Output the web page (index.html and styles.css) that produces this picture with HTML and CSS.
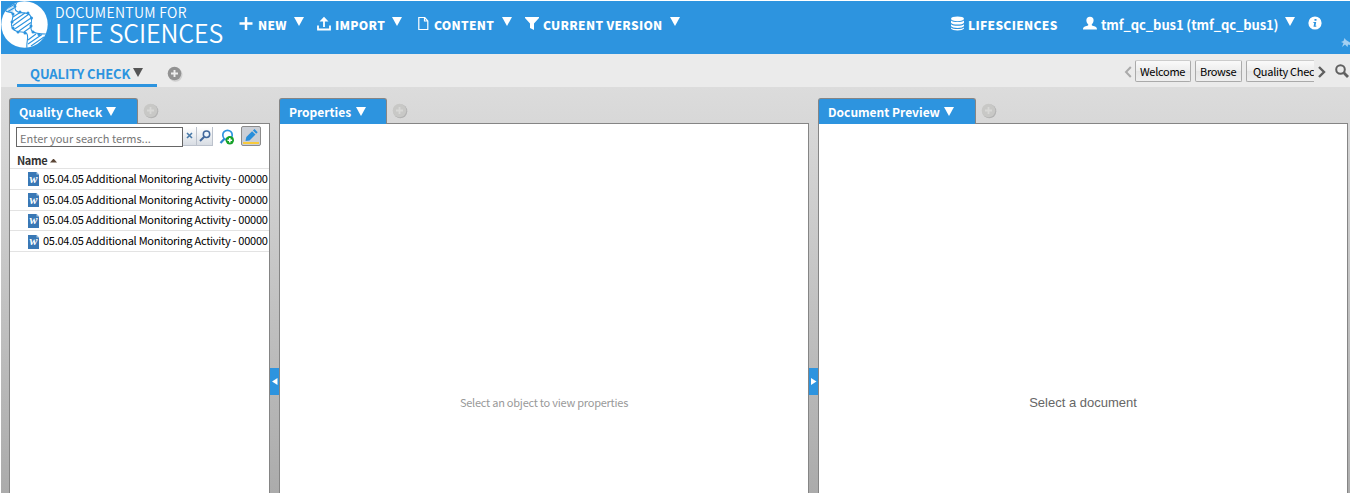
FILE: index.html
```html
<!DOCTYPE html>
<html lang="en">
<head>
<meta charset="utf-8">
<title>Documentum for Life Sciences</title>
<link rel="stylesheet" href="styles.css">
</head>
<body>
<div class="app">
  <header class="header">
    <svg class="logo" width="49" height="48" viewBox="0 0 49 48">
      <defs><clipPath id="disc"><circle cx="24.500" cy="23.500" r="23.500"/></clipPath></defs>
      <circle cx="24.500" cy="23.500" r="23.200" fill="#fff"/>
      <g clip-path="url(#disc)">
        <path d="M0 0H17L14 7L12.500 13L5 10L0 14z" fill="#2d94df" opacity=".25"/>
        <g fill="none" stroke="#2d94df" stroke-width="1.100">
          <path d="M17 1C14 6 14 9 18 11S29 10 31 16S29 27 32 30S40 33 46 33"/>
          <path d="M5 9C7 13 13 9 13 14S9 25 14 29S25 29 27 33S26 41 27 47"/>
          <path d="M6 8L15 3M8 10.500L14 7M13 16L20 11.500M12.500 20.500L25 12M12.500 25L29 13M14 28.500L31 17M19 30L31 21.500M24 31L31 26M28 39L36 33M28 43L42 33.500M31 45L44 36"/>
        </g>
        <g fill="#2d94df"><circle cx="15" cy="5.500" r="1.400"/><circle cx="20" cy="11" r="1.500"/><circle cx="28" cy="12" r="1.500"/><circle cx="31.500" cy="17" r="1.500"/><circle cx="31" cy="25" r="1.500"/><circle cx="13" cy="13" r="1.500"/><circle cx="12" cy="21" r="1.500"/><circle cx="13" cy="27" r="1.500"/><circle cx="18" cy="31" r="1.500"/><circle cx="25" cy="32" r="1.500"/><circle cx="33" cy="31" r="1.500"/><circle cx="39" cy="33.500" r="1.500"/></g>
      </g>
    </svg>
    <div class="brand"><span class="brand-top">DOCUMENTUM FOR</span><span class="brand-main">LIFE SCIENCES</span></div>
    <nav class="menu">
      <div class="item new"><svg width="18" height="16" viewBox="0 0 18 16"><path d="M7 1v13M.5 7.500h13" stroke="#fff" stroke-width="2.500"/></svg><span class="label">NEW</span><i class="tri"></i></div>
      <div class="item import"><svg width="18" height="16" viewBox="0 0 18 16"><path d="M1 9.500v4h12v-4M7 11V4" fill="none" stroke="#fff" stroke-width="1.800"/><path d="M2.500 5.500L7 .7l4.500 4.800z" fill="#fff"/></svg><span class="label">IMPORT</span><i class="tri"></i></div>
      <div class="item content"><svg width="16" height="16" viewBox="0 0 16 16"><path d="M.8 1.500h6L9.800 5v8.500h-9zM6.500 1.500V5h3" fill="none" stroke="#fff" stroke-width="1.200"/></svg><span class="label">CONTENT</span><i class="tri"></i></div>
      <div class="item version"><svg width="18" height="16" viewBox="0 0 18 16"><path d="M0 1h14v1L9 7.500V14l-4-2V7.500L0 2z" fill="#fff"/></svg><span class="label">CURRENT VERSION</span><i class="tri"></i></div>
    </nav>
    <div class="account">
      <div class="item repo"><svg width="18" height="16" viewBox="0 0 18 16"><g fill="#fff"><ellipse cx="7.500" cy="2.800" rx="6.500" ry="2.400"/><path d="M1 4.500c2 2 11 2 13 0v2.200c-1 2.500-12 2.500-13 0zM1 8.200c2 2 11 2 13 0v1.800c-1 2.500-12 2.500-13 0zM1 11.500c2 2 11 2 13 0v1c-1 2.500-12 2.500-13 0z"/></g></svg><span class="label">LIFESCIENCES</span></div>
      <div class="item user"><svg width="18" height="16" viewBox="0 0 18 16"><path d="M7 .8c5 0 4 6 1.800 7.500v1c2 1.200 5.200.8 5.200 4.200H0c0-3.400 3.200-3 5.200-4.200v-1C3 6.800 2 .8 7 .8z" fill="#fff"/></svg><span class="label">tmf_qc_bus1 (tmf_qc_bus1)</span><i class="tri"></i></div>
      <svg class="info" width="14" height="14" viewBox="0 0 14 14"><circle cx="7" cy="7" r="6.600" fill="#fff"/><path d="M6.500 3h2v1.700h-2zM5.500 6h2.700L7.500 9.700h1l-.3 1H5.500L6.200 7h-.9z" fill="#2d94df"/></svg>
      <svg class="pin" width="9" height="10" viewBox="0 0 9 10"><path d="M3.500 0L5 2l4 2.500V7L7 6.500 6.500 9 4 6.500 1 9l1.500-4L0 4l2.500-1z" fill="#a4d0f2"/></svg>
    </div>
  </header>

  <div class="tabs">
    <div class="tab-active"><span class="tab-label">QUALITY CHECK</span><i class="tri dark"></i></div>
    <svg class="add" width="16" height="16" viewBox="0 0 16 16"><circle cx="8.500" cy="8.700" r="7" fill="#d0d0d0"/><circle cx="7.500" cy="7.500" r="6.800" fill="#929292"/><path d="M7.500 4v7M4 7.500h7" stroke="#ededed" stroke-width="1.900"/></svg>
    <div class="crumbs">
      <svg class="prev" width="8" height="12" viewBox="0 0 8 12"><path d="M6.800 1L2 6l4.800 5" fill="none" stroke="#aaa" stroke-width="2"/></svg>
      <div class="crumb welcome">Welcome</div>
      <div class="crumb browse">Browse</div>
      <div class="crumb quality">Quality Check</div>
      <svg class="next" width="8" height="12" viewBox="0 0 8 12"><path d="M1 1l5 5-5 5" fill="none" stroke="#606060" stroke-width="2.400"/></svg>
      <svg class="find" width="14" height="14" viewBox="0 0 14 14"><circle cx="5.500" cy="5.500" r="4.300" fill="none" stroke="#606060" stroke-width="2"/><path d="M8.800 8.800l4.200 4.200" stroke="#606060" stroke-width="2.800"/></svg>
    </div>
  </div>

  <main class="work">
    <section class="panel search-panel">
      <div class="panel-tabs"><div class="panel-tab t1"><span class="ptext">Quality Check</span><i class="tri"></i></div><svg class="ghost" width="16" height="16" viewBox="0 0 16 16"><circle cx="8.300" cy="8.300" r="7" fill="#b4b4b4"/><circle cx="7.500" cy="7.500" r="6.800" fill="#c8c8c6"/><path d="M7.500 4v7M4 7.500h7" stroke="#d8d8d6" stroke-width="1.800"/></svg></div>
      <div class="panel-body">
        <div class="search">
          <div class="field">Enter your search terms...</div>
          <div class="sbtn clear"><svg width="7" height="7" viewBox="0 0 7 7"><path d="M1 1l5 5M6 1L1 6" stroke="#4879a8" stroke-width="1.600"/></svg></div>
          <div class="sbtn go"><svg width="12" height="12" viewBox="0 0 12 12"><circle cx="7.500" cy="4.300" r="3.200" fill="#eef5fc" stroke="#41679b" stroke-width="1.500"/><path d="M5 7L1 11" stroke="#41679b" stroke-width="2"/></svg></div>
          <svg class="advanced" width="17" height="17" viewBox="0 0 17 17"><path d="M6 9.200L1.500 14" stroke="#2d86cd" stroke-width="2.200"/><circle cx="8.500" cy="6" r="4.700" fill="#fff" stroke="#2d94df" stroke-width="1.700"/><circle cx="10.800" cy="11.300" r="4.200" fill="#16a22a"/><path d="M10.800 9v4.600M8.500 11.300h4.600" stroke="#fff" stroke-width="1.600"/></svg>
          <div class="edit"><svg width="16" height="18" viewBox="0 0 16 18"><path d="M2.500 14l.8-4 5.800-5.800 3.400 3.400-6 5.800z" fill="#288edb"/><path d="M9.900 3.400L11.500 2l3.200 3.300-1.500 1.500z" fill="#288edb"/><path d="M0 16h16" stroke="#f8ca3c" stroke-width="2"/></svg></div>
        </div>
        <div class="name-head"><span class="name-label">Name</span><i class="sort"></i></div>
        <div class="row"><svg class="doc" width="11" height="14" viewBox="0 0 11 14"><path d="M0 0h8.500L11 2.500V14H0z" fill="#3978b5"/><path d="M8.500 0v2.500H11z" fill="#a9c8e4"/></svg><b class="w">w</b><span class="row-text">05.04.05 Additional Monitoring Activity - 00000</span></div>
        <div class="row"><svg class="doc" width="11" height="14" viewBox="0 0 11 14"><path d="M0 0h8.500L11 2.500V14H0z" fill="#3978b5"/><path d="M8.500 0v2.500H11z" fill="#a9c8e4"/></svg><b class="w">w</b><span class="row-text">05.04.05 Additional Monitoring Activity - 00000</span></div>
        <div class="row"><svg class="doc" width="11" height="14" viewBox="0 0 11 14"><path d="M0 0h8.500L11 2.500V14H0z" fill="#3978b5"/><path d="M8.500 0v2.500H11z" fill="#a9c8e4"/></svg><b class="w">w</b><span class="row-text">05.04.05 Additional Monitoring Activity - 00000</span></div>
        <div class="row"><svg class="doc" width="11" height="14" viewBox="0 0 11 14"><path d="M0 0h8.500L11 2.500V14H0z" fill="#3978b5"/><path d="M8.500 0v2.500H11z" fill="#a9c8e4"/></svg><b class="w">w</b><span class="row-text">05.04.05 Additional Monitoring Activity - 00000</span></div>
      </div>
    </section>
    <div class="split"><div class="handle"><svg width="7" height="9" viewBox="0 0 7 9"><path d="M6.500 1v7L1 4.500z" fill="#fff"/></svg></div></div>
    <section class="panel">
      <div class="panel-tabs"><div class="panel-tab t2"><span class="ptext">Properties</span><i class="tri"></i></div><svg class="ghost" width="16" height="16" viewBox="0 0 16 16"><circle cx="8.300" cy="8.300" r="7" fill="#b4b4b4"/><circle cx="7.500" cy="7.500" r="6.800" fill="#c8c8c6"/><path d="M7.500 4v7M4 7.500h7" stroke="#d8d8d6" stroke-width="1.800"/></svg></div>
      <div class="panel-body"><p class="empty props">Select an object to view properties</p></div>
    </section>
    <div class="split"><div class="handle"><svg width="7" height="9" viewBox="0 0 7 9"><path d="M1 1v7l5.500-3.500z" fill="#fff"/></svg></div></div>
    <section class="panel">
      <div class="panel-tabs"><div class="panel-tab t3"><span class="ptext">Document Preview</span><i class="tri"></i></div><svg class="ghost" width="16" height="16" viewBox="0 0 16 16"><circle cx="8.300" cy="8.300" r="7" fill="#b4b4b4"/><circle cx="7.500" cy="7.500" r="6.800" fill="#c8c8c6"/><path d="M7.500 4v7M4 7.500h7" stroke="#d8d8d6" stroke-width="1.800"/></svg></div>
      <div class="panel-body"><p class="empty preview">Select a document</p></div>
    </section>
  </main>
</div>
</body>
</html>
```

FILE: styles.css
```css
* { box-sizing: border-box; }
body { margin: 0; background: #fff; font-family: "Noto Sans CJK SC", "Open Sans", sans-serif; overflow: hidden; }
svg { display: block; flex: none; }
.app { width: 1351px; height: 494px; padding: 1px; display: flex; flex-direction: column; }
.tri { flex: none; width: 10px; height: 9px; background: #fff; clip-path: polygon(0 0, 100% 0, 50% 100%); }
.tri.dark { background: #555; }

.header { height: 53px; flex: none; display: flex; align-items: flex-start; background: #2d94df; color: #fff; overflow: hidden; }
.logo { margin-left: -1px; }
.brand { width: 190px; padding: 2px 0 0 6px; display: flex; flex-direction: column; white-space: nowrap; font-weight: 350; }
.brand-top { font-size: 14px; line-height: 19px; letter-spacing: 0.32px; }
.brand-main { font-size: 25px; line-height: 20px; letter-spacing: -0.15px; }
.menu, .account { display: flex; height: 48px; align-items: center; font-size: 12px; line-height: 18px; font-weight: 900; white-space: nowrap; }
.item { display: flex; align-items: center; }
.item svg { margin-top: -3px; }
.item .tri { margin-top: -7px; }
.label { flex: none; letter-spacing: 0.3px; }
.new { width: 78px; }
.new svg { margin-right: 1px; }
.new .label { width: 36px; }
.import { width: 101px; }
.import .label { width: 57px; }
.content { width: 107px; }
.content .label { width: 68px; }
.version .label { width: 127px; }
.account { flex: 1; justify-content: flex-end; }
.repo { width: 132px; }
.user { width: 226px; font-size: 13px; font-weight: 700; }
.user svg { margin-left: 1px; }
.user .label { width: 184px; letter-spacing: -0.1px; }
.info { margin: -4px 19px 0 0; }
.pin { align-self: flex-end; margin-bottom: 1px; }

.tabs { height: 33px; flex: none; display: flex; background: #ebebeb; padding-left: 16px; }
.tab-active { width: 140px; height: 33px; border-bottom: 3px solid #2d94df; padding: 0 0 0 13px; display: flex; color: #2d94df; font-weight: 700; font-size: 13px; line-height: 39px; white-space: nowrap; }
.tab-label { width: 103px; flex: none; letter-spacing: -0.12px; }
.tab-active .tri { margin-top: 14px; }
.add { margin: 12px 0 0 10px; }
.crumbs { margin-left: auto; display: flex; padding-top: 6px; }
.crumb { height: 22px; border: 1px solid #aaa; border-top-color: #ccc; border-radius: 2px; background: linear-gradient(#fafafa, #ededed 50%, #e5e5e5 51%, #efefef); color: #000; line-height: 21px; white-space: nowrap; overflow: hidden; margin-right: 4px; padding-left: 4px; font-size: 11px; letter-spacing: -0.3px; }
.welcome { width: 56px; }
.browse { width: 47px; }
.quality { width: 68px; border-right: 0; border-radius: 2px 0 0 2px; padding-left: 6px; }
.prev { margin: 6px 3px 0 0; }
.next { margin-top: 6px; }
.find { margin: 4px 1px 0 9px; }

.work { flex: 1; min-height: 0; padding: 11px 2px 0 8px; background: linear-gradient(#dcdcdc, #ababab); display: grid; grid-template-columns: 261px 9px 530px 9px 530px; }
.panel { min-width: 0; display: flex; flex-direction: column; }
.panel-tabs { height: 26px; margin-bottom: -1px; flex: none; display: flex; position: relative; z-index: 1; }
.panel-tab { background: #2d94df; border: 1px solid #858585; border-bottom: 0; border-radius: 3px 3px 0 0; display: flex; padding-left: 9px; color: #fff; font-weight: 700; font-size: 12px; line-height: 25px; white-space: nowrap; }
.panel-tab .tri { margin-top: 8px; }
.t1 { width: 129px; }
.t1 .ptext { width: 87px; letter-spacing: 0.08px; }
.t2 { width: 108px; }
.t2 .ptext { width: 67px; }
.t3 { width: 158px; }
.t3 .ptext { width: 116px; }
.ghost { margin: 5px 0 0 5px; }
.panel-body { flex: 1; background: #fff; border: 1px solid #858585; border-bottom: 0; overflow: hidden; }
.split { padding-top: 270px; }
.handle { height: 27px; background: #2d94df; display: flex; align-items: center; justify-content: center; }

.search { height: 24px; padding: 3px 0 0 6px; display: flex; }
.field { width: 167px; height: 20px; border: 1px solid #666; color: #777; font-size: 11px; line-height: 20px; padding-left: 3px; white-space: nowrap; }
.sbtn { height: 19px; width: 15px; background: linear-gradient(#fff, #d8dde4); border-right: 1px solid #bcc2cc; border-bottom: 1px solid #bcc2cc; display: flex; align-items: center; justify-content: center; }
.clear { width: 14px; }
.go { width: 16px; }
.clear svg { margin-top: -2px; }
.advanced { margin: 2px 0 0 6px; }
.edit { width: 20px; height: 20px; margin: -1px 0 0 5px; border: 1px solid #8c8c8c; border-radius: 2px; background: #cbcfd6; display: flex; justify-content: center; }
.name-head { height: 21px; display: flex; align-items: center; padding-left: 7px; font-size: 11px; font-weight: 700; color: #333; border-bottom: 1px solid #e3e3e3; padding-top: 3px; line-height: 16px; letter-spacing: -0.4px; }
.name-label { width: 33px; }
.sort { width: 7px; height: 4px; margin-top: 2px; background: #5b4636; clip-path: polygon(50% 0, 100% 100%, 0 100%); }
.row { height: 20.75px; border-bottom: 1px solid #e3e3e3; display: flex; align-items: center; padding-left: 18px; font-size: 11px; line-height: 18px; color: #000; white-space: nowrap; overflow: hidden; }
.doc { margin-top: 1px; }
.w { flex: none; width: 11px; margin-left: -11px; text-align: center; color: #fff; font: italic 700 12px/12px "Liberation Serif", serif; }
.row-text { flex: none; margin: -2px 0 0 4px; letter-spacing: -0.26px; }
.empty { margin: 0; text-align: center; white-space: nowrap; }
.props { padding-top: 269px; font-size: 11px; line-height: 18px; color: #999; letter-spacing: -0.24px; }
.preview { padding-top: 270px; font: 13px/18px "Liberation Sans", sans-serif; color: #666; }
```
